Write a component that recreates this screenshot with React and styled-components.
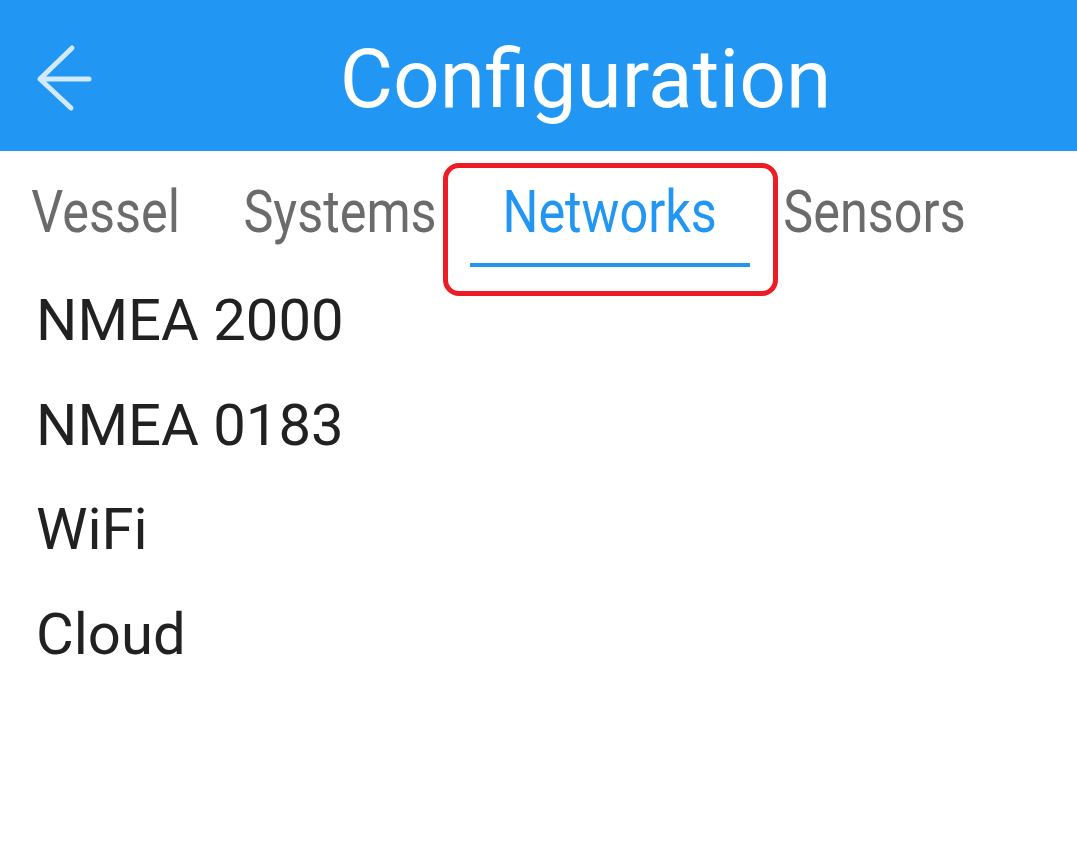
import { createGlobalStyle, styled } from "styled-components";

const GlobalStyle = createGlobalStyle`
  body {
    margin: 0;
    background: #ffffff;
    font-family: Roboto, "Noto Sans", sans-serif;
  }
`;

const tabs = [
  { label: "Vessel", width: 211 },
  { label: "Systems", width: 259 },
  { label: "Networks", width: 280, active: true },
  { label: "Sensors", width: 250 },
];

const items = ["NMEA 2000", "NMEA 0183", "WiFi", "Cloud"];

const App = () => {
  return (
    <Page>
      <GlobalStyle />
      <Header>
        <BackButton aria-label="Back">
          <svg width="66" height="72" viewBox="30 42 66 72" fill="none">
            <path
              d="M72 47 L40 78 L71 107 M40 78 L89 78"
              stroke="rgba(255,255,255,0.8)"
              strokeWidth="5"
              strokeLinecap="round"
              strokeLinejoin="round"
            />
          </svg>
        </BackButton>
        <Title>Configuration</Title>
      </Header>

      <TabBar>
        {tabs.map((t) => (
          <Tab key={t.label} $width={t.width} $active={t.active}>
            <TabLabel>{t.label}</TabLabel>
            {t.active && <Highlight />}
          </Tab>
        ))}
      </TabBar>

      <List>
        {items.map((i) => (
          <Item key={i}>{i}</Item>
        ))}
      </List>
    </Page>
  );
};

const Page = styled.div`
  width: 1077px;
  min-height: 853px;
  background: #ffffff;
`;

const Header = styled.header`
  display: flex;
  align-items: center;
  height: 151px;
  background-color: #2196f3;
`;

const BackButton = styled.button`
  width: 100px;
  height: 151px;
  border: none;
  background: transparent;
  display: flex;
  align-items: center;
  justify-content: flex-start;
  padding: 6px 0 0 30px;
  box-sizing: border-box;
`;

const Title = styled.h1`
  flex: 1;
  margin: 0;
  padding: 6px 6px 0 0;
  text-align: center;
  color: #ffffff;
  font-family: Roboto, sans-serif;
  font-weight: 400;
  font-size: 82px;
  line-height: 1;
`;

const TabBar = styled.nav`
  display: flex;
`;

const Tab = styled.div`
  position: relative;
  flex: 0 0 ${(p) => p.$width}px;
  box-sizing: border-box;
  padding: 31px 0 25px;
  color: ${(p) => (p.$active ? "#2196f3" : "#6b6b6b")};
  text-align: center;
  white-space: nowrap;

  &::after {
    content: "";
    position: absolute;
    left: 0;
    right: 0;
    bottom: 0;
    height: 4px;
    background: ${(p) => (p.$active ? "#2196f3" : "transparent")};
  }
`;

const TabLabel = styled.span`
  display: inline-block;
  font-family: Roboto, sans-serif;
  font-size: 60px;
  line-height: 60px;
  transform: scaleX(0.84);
  transform-origin: center;
`;

const Highlight = styled.div`
  position: absolute;
  left: -27px;
  right: -28px;
  top: 12px;
  bottom: -29px;
  border: 5px solid #ed1c24;
  border-radius: 16px;
  pointer-events: none;
`;

const List = styled.ul`
  list-style: none;
  margin: 0;
  padding: 1px 0 0 36px;
`;

const Item = styled.li`
  font-family: Roboto, sans-serif;
  font-size: 58px;
  line-height: 104.7px;
  color: #212121;
`;

export default App;
